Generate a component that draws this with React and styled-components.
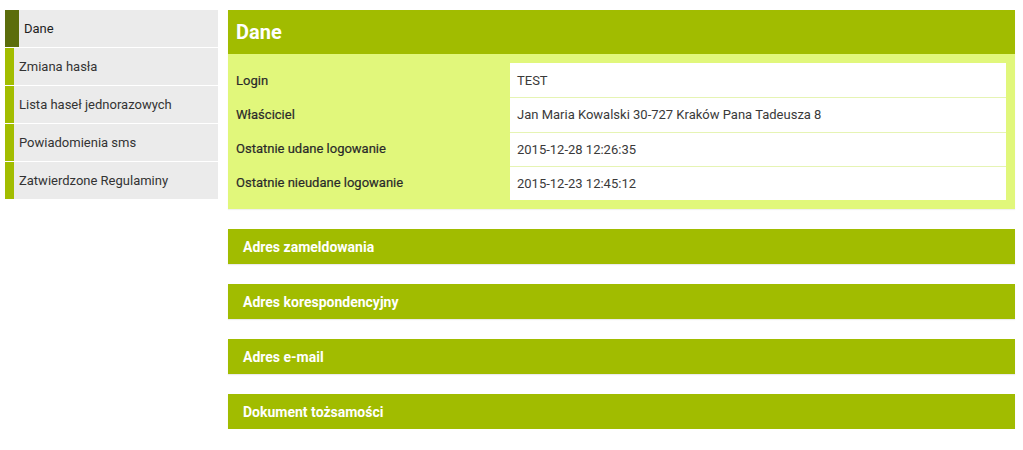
import React from 'react';
import styled, { createGlobalStyle } from 'styled-components';

const GlobalStyle = createGlobalStyle`
  body {
    margin: 0;
    background: #ffffff;
    font-family: Roboto, "Noto Sans", Arial, sans-serif;
    color: #333333;
  }
`;

const Page = styled.div`
  display: flex;
  align-items: flex-start;
  gap: 10px;
  padding: 10px 8px 0 5px;
`;

const Sidebar = styled.ul`
  list-style: none;
  margin: 0;
  padding: 0;
  width: 213px;
  display: flex;
  flex-direction: column;
  gap: 1px;
`;

const MenuItem = styled.li`
  display: flex;
  align-items: center;
  height: 37px;
  box-sizing: border-box;
  padding-left: 5px;
  background: #ebebeb;
  border-left: ${(p) => (p.$active ? '14px solid #5b6d0c' : '9px solid #a2bd00')};
  font-size: 13px;
  color: ${(p) => (p.$active ? '#1e1e1e' : '#333333')};
  cursor: pointer;
`;

const Main = styled.div`
  flex: 1;
  display: flex;
  flex-direction: column;
  gap: 20px;
`;

const Panel = styled.section`
  box-shadow: 0 1px 1px rgba(0, 0, 0, 0.06);
`;

const PanelHeader = styled.h2`
  margin: 0;
  height: 44px;
  display: flex;
  align-items: center;
  padding-left: 8px;
  background: #a1bc00;
  color: #ffffff;
  font-size: 20px;
  font-weight: 700;
`;

const PanelBody = styled.div`
  background: #e1f77b;
  padding: 9px 9px 9px 0;
`;

const InfoGrid = styled.div`
  display: grid;
  grid-template-columns: 282px 1fr;
`;

const Label = styled.div`
  height: 34.25px;
  display: flex;
  align-items: center;
  padding-left: 8px;
  font-size: 13px;
  color: #2a2a2a;
  -webkit-text-stroke: 0.2px #2a2a2a;
`;

const Value = styled.div`
  height: 34.25px;
  box-sizing: border-box;
  display: flex;
  align-items: center;
  padding-left: 7px;
  background: #ffffff;
  border-top: ${(p) => (p.$first ? 'none' : '1px solid #e6f4b4')};
  font-size: 13px;
  color: #3a3a3a;
`;

const Bar = styled.div`
  height: 35px;
  display: flex;
  align-items: center;
  padding-left: 15px;
  background: #a1bc00;
  color: #ffffff;
  font-size: 14px;
  font-weight: 700;
  box-shadow: 0 1px 1px rgba(0, 0, 0, 0.08);
  cursor: pointer;
`;

const menu = [
  'Dane',
  'Zmiana hasła',
  'Lista haseł jednorazowych',
  'Powiadomienia sms',
  'Zatwierdzone Regulaminy',
];

const info = [
  ['Login', 'TEST'],
  ['Właściciel', 'Jan Maria Kowalski 30-727 Kraków Pana Tadeusza 8'],
  ['Ostatnie udane logowanie', '2015-12-28 12:26:35'],
  ['Ostatnie nieudane logowanie', '2015-12-23 12:45:12'],
];

const sections = [
  'Adres zameldowania',
  'Adres korespondencyjny',
  'Adres e-mail',
  'Dokument tożsamości',
];

function App() {
  return (
    <>
      <GlobalStyle />
      <Page>
        <Sidebar>
          {menu.map((item, i) => (
            <MenuItem key={item} $active={i === 0}>{item}</MenuItem>
          ))}
        </Sidebar>
        <Main>
          <Panel>
            <PanelHeader>Dane</PanelHeader>
            <PanelBody>
              <InfoGrid>
                {info.map(([label, value], i) => (
                  <React.Fragment key={label}>
                    <Label>{label}</Label>
                    <Value $first={i === 0}>{value}</Value>
                  </React.Fragment>
                ))}
              </InfoGrid>
            </PanelBody>
          </Panel>
          {sections.map((s) => (
            <Bar key={s}>{s}</Bar>
          ))}
        </Main>
      </Page>
    </>
  );
}

export default App;
